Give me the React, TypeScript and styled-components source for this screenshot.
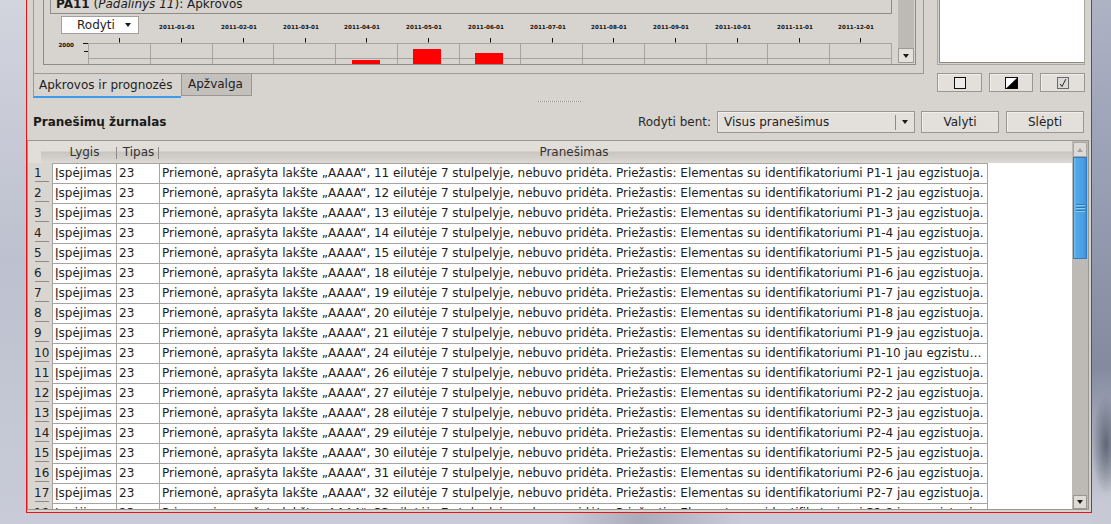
import React from "react";
import styled, { createGlobalStyle } from "styled-components";

const rows: [number, string][] = [
  [11, "P1-1"], [12, "P1-2"], [13, "P1-3"], [14, "P1-4"], [15, "P1-5"],
  [18, "P1-6"], [19, "P1-7"], [20, "P1-8"], [21, "P1-9"], [24, "P1-10"],
  [26, "P2-1"], [27, "P2-2"], [28, "P2-3"], [29, "P2-4"], [30, "P2-5"],
  [31, "P2-6"], [32, "P2-7"], [33, "P2-8"],
];

const message = (line: number, id: string) =>
  `Priemonė, aprašyta lakšte „AAAA“, ${line} eilutėje 7 stulpelyje, nebuvo pridėta. Priežastis: Elementas su identifikatoriumi ${id} jau egzistuoja.`;

const GlobalStyle = createGlobalStyle`
  html, body {
    margin: 0;
    padding: 0;
  }
  body {
    width: 1111px;
    height: 524px;
    overflow: hidden;
    font-family: "DejaVu Sans", "Liberation Sans", sans-serif;
    font-size: 12px;
    color: #1e1e1e;
  }
`;

export default function App() {
  return (
    <>
      <GlobalStyle />
      <Desktop>
        <Window>
          <TopSection>
            <TabWidget>
              <Pane>
                <ScrollArea>
                  <Viewport>
                    <GroupTitle>
                      <b>PA11</b> (<i>Padalinys 11</i>): Apkrovos
                    </GroupTitle>
                    <ChartCanvas>
                      <LoadChart />
                      <ChartCombo>
                        <span>Rodyti</span>
                        <ArrowDown />
                      </ChartCombo>
                    </ChartCanvas>
                  </Viewport>
                  <SmallScrollbar>
                    <Trough />
                    <ScrollButton>
                      <ArrowDown />
                    </ScrollButton>
                  </SmallScrollbar>
                </ScrollArea>
              </Pane>
              <TabBar>
                <ActiveTab>Apkrovos ir prognozės</ActiveTab>
                <InactiveTab>Apžvalga</InactiveTab>
              </TabBar>
            </TabWidget>
            <RightPanel>
              <ListBox />
              <IconButtons>
                <IconButton>
                  <svg width="12" height="12" viewBox="0 0 12 12">
                    <rect x="0.5" y="0.5" width="11" height="11" fill="#ecebea" stroke="#111" />
                  </svg>
                </IconButton>
                <IconButton>
                  <svg width="13" height="12" viewBox="0 0 13 12">
                    <rect x="0.5" y="0.5" width="12" height="11" fill="#fff" stroke="#111" />
                    <path d="M12.5 0.5 L12.5 11.5 L1 11.5 Z" fill="#000" />
                  </svg>
                </IconButton>
                <IconButton>
                  <svg width="12" height="12" viewBox="0 0 12 12">
                    <rect x="0.5" y="0.5" width="11" height="11" fill="#dcdad8" stroke="#6a6a6a" />
                    <path d="M3 7 L5 9.5 L8.8 2.2" fill="none" stroke="#222" strokeWidth="1" />
                  </svg>
                </IconButton>
              </IconButtons>
            </RightPanel>
          </TopSection>

          <Splitter>
            <SplitterHandle />
          </Splitter>

          <LogHeader>
            <LogTitle>Pranešimų žurnalas</LogTitle>
            <Spacer />
            <FilterLabel>Rodyti bent:</FilterLabel>
            <FilterCombo>
              <ComboText>Visus pranešimus</ComboText>
              <ComboArrowBox>
                <ArrowDown />
              </ComboArrowBox>
            </FilterCombo>
            <PushButton $gap={6}>Valyti</PushButton>
            <PushButton $gap={7}>Slėpti</PushButton>
          </LogHeader>

          <TableFrame>
            <TableMain>
              <HeaderRow>
                <HeadCell $w={24} />
                <HeadCell $w={65} $sep={0}>Lygis</HeadCell>
                <HeadCell $w={43} $sep={1}>Tipas</HeadCell>
                <HeadCell $w={828}>Pranešimas</HeadCell>
              </HeaderRow>
              <TableBody>
                {rows.map(([line, id], i) => (
                  <Row key={id}>
                    <RowNum>{i + 1}</RowNum>
                    <Cell $w={65} $first>Įspėjimas</Cell>
                    <Cell $w={43}>23</Cell>
                    <Cell $w={828} $tight>{message(line, id)}</Cell>
                  </Row>
                ))}
              </TableBody>
            </TableMain>
            <TableScrollbar>
              <UpButton>
                <ArrowUp />
              </UpButton>
              <Thumb>
                <Grip />
              </Thumb>
              <Trough />
              <DownButton>
                <ArrowDown />
              </DownButton>
            </TableScrollbar>
          </TableFrame>
        </Window>
      </Desktop>
    </>
  );
}

function LoadChart() {
  const ticks = Array.from({ length: 13 }, (_, i) => Math.round(119.3 + 61.75 * i));
  const grid = Array.from({ length: 14 }, (_, i) => Math.round(88 + 61.75 * i));
  return (
    <svg width={854} height={60} viewBox="44 14 854 60" style={{ display: "block" }}>
      <g fontFamily="DejaVu Sans, sans-serif" fontSize="5.6" fontWeight="bold" fill="#111">
        {ticks.slice(1).map((x, i) => (
          <text key={x} x={x - 4} y={29} textAnchor="middle">
            {`2011-${String(i + 1).padStart(2, "0")}-01`}
          </text>
        ))}
        <text x={74} y={47} textAnchor="end">
          2000
        </text>
      </g>
      <g stroke="#111" strokeWidth="1">
        {ticks.map((x) => (
          <line key={x} x1={x + 0.5} x2={x + 0.5} y1={38} y2={42.5} />
        ))}
        <line x1={83} x2={88} y1={43.5} y2={43.5} />
        <line x1={84} x2={88} y1={51.5} y2={51.5} />
      </g>
      <g stroke="#a7a3a0" strokeWidth="1">
        {grid.map((x) => (
          <line key={x} x1={x + 0.5} x2={x + 0.5} y1={43} y2={74} />
        ))}
        <line x1={88} x2={892} y1={43.5} y2={43.5} />
        <line x1={88} x2={892} y1={58.5} y2={58.5} />
      </g>
      <g fill="#ff0000">
        <rect x={352} y={60} width={28} height={14} />
        <rect x={413} y={49} width={28} height={25} />
        <rect x={475} y={53} width={28} height={21} />
      </g>
    </svg>
  );
}

const Desktop = styled.div`
  width: 1111px;
  height: 524px;
  overflow: hidden;
  background:
    radial-gradient(ellipse 14px 50px at 1106px 445px, rgba(70, 78, 92, 0.75), transparent),
    linear-gradient(to bottom, #aeb3c4 0%, #959cb1 40%, #848b9f 70%, #c7cad5 96%) right top / 19px 100% no-repeat,
    linear-gradient(to right, transparent 560px, rgba(96, 100, 112, 0.3) 640px, transparent 740px) left bottom / 100% 11px no-repeat,
    linear-gradient(to bottom, #d2d4de 0%, #bdc0ce 50%, #c9ccd8 100%);
`;

const Window = styled.div`
  margin-left: 26px;
  width: 1066px;
  height: 513px;
  box-sizing: border-box;
  border: 1px solid #ee1111;
  border-top: none;
  background: #d7d3cf;
  display: flex;
  flex-direction: column;
`;

const TopSection = styled.div`
  height: 98px;
  flex-shrink: 0;
  display: flex;
  padding-left: 6px;
`;

const TabWidget = styled.div`
  width: 891px;
  display: flex;
  flex-direction: column;
`;

const Pane = styled.div`
  height: 74px;
  box-sizing: border-box;
  border: 1px solid #9d9995;
  border-top: none;
  padding: 0 7px 8px 9px;
  display: flex;
`;

const ScrollArea = styled.div`
  flex: 1;
  display: flex;
  border: 1px solid #8f8b87;
  border-top: none;
`;

const Viewport = styled.div`
  flex: 1;
  overflow: hidden;
  display: flex;
  flex-direction: column;
`;

const GroupTitle = styled.div`
  flex-shrink: 0;
  margin: -6px 6px 0;
  border: 1px solid #8f8b87;
  padding: 2px 5px 2px;
  line-height: 14px;
  white-space: nowrap;
  color: #1a1a1a;
`;

const ChartCanvas = styled.div`
  position: relative;
  height: 60px;
  flex-shrink: 0;
`;

const ChartCombo = styled.div`
  position: absolute;
  left: 17px;
  top: 2px;
  width: 78px;
  height: 18px;
  box-sizing: border-box;
  background: #fff;
  border: 1px solid #a3a09c;
  display: flex;
  align-items: center;
  justify-content: space-between;
  padding: 0 7px 0 15px;
  line-height: 16px;
`;

const SmallScrollbar = styled.div`
  width: 16px;
  margin-right: 1px;
  display: flex;
  flex-direction: column;
  padding-bottom: 1px;
`;

const Trough = styled.div`
  flex: 1;
  background: #bdb9b5;
`;

const ScrollButton = styled.div`
  height: 15px;
  box-sizing: border-box;
  background: #e4e1dd;
  border: 1px solid #9d9995;
  display: flex;
  align-items: center;
  justify-content: center;
`;

const ArrowDown = styled.span`
  width: 0;
  height: 0;
  border-left: 3.5px solid transparent;
  border-right: 3.5px solid transparent;
  border-top: 4px solid #1a1a1a;
`;

const ArrowUp = styled.span`
  width: 0;
  height: 0;
  border-left: 3.5px solid transparent;
  border-right: 3.5px solid transparent;
  border-bottom: 4px solid #a6a29e;
`;

const TabBar = styled.div`
  height: 24px;
  display: flex;
  align-items: flex-start;
`;

const ActiveTab = styled.div`
  width: 148px;
  height: 24px;
  box-sizing: border-box;
  border-left: 1px solid #9d9995;
  border-bottom: 2px solid #3f9be6;
  padding-left: 5px;
  line-height: 22px;
  white-space: nowrap;
`;

const InactiveTab = styled.div`
  width: 71px;
  height: 23px;
  margin-top: -1px;
  box-sizing: border-box;
  border: 1px solid #9a9692;
  background: #c4c0bc;
  padding-left: 6px;
  line-height: 20px;
  white-space: nowrap;
`;

const RightPanel = styled.div`
  width: 148px;
  margin-left: 13px;
  display: flex;
  flex-direction: column;
`;

const ListBox = styled.div`
  height: 65px;
  box-sizing: border-box;
  background: #fff;
  border: 1px solid #aaa6a2;
  border-top: none;
  box-shadow: inset 1px -1px 0 #d7d3cf, inset 2px -2px 0 #8d8985;
`;

const IconButtons = styled.div`
  margin-top: 8px;
  height: 19px;
  display: grid;
  grid-template-columns: 45px 44px 45px;
  column-gap: 7px;
`;

const IconButton = styled.div`
  box-sizing: border-box;
  border: 1px solid #9a9692;
  background: #e3e0dc;
  box-shadow: inset 1px 1px 0 #f1efed;
  display: flex;
  align-items: center;
  justify-content: center;
`;

const Splitter = styled.div`
  height: 13px;
  flex-shrink: 0;
  display: flex;
  justify-content: center;
  padding-top: 3px;
  box-sizing: border-box;
`;

const SplitterHandle = styled.div`
  width: 43px;
  height: 1px;
  background: repeating-linear-gradient(to right, #8c8884 0 1px, #f4f2f0 1px 2px);
`;

const LogHeader = styled.div`
  height: 22px;
  flex-shrink: 0;
  display: flex;
  align-items: center;
  padding: 0 7px 0 6px;
`;

const LogTitle = styled.div`
  font-weight: bold;
  color: #1a1a1a;
`;

const Spacer = styled.div`
  flex: 1;
`;

const FilterLabel = styled.div`
  margin-right: 6px;
  color: #2a2a2a;
`;

const FilterCombo = styled.div`
  width: 198px;
  height: 22px;
  box-sizing: border-box;
  border: 1px solid #9a9692;
  background: #e3e0dc;
  box-shadow: inset 1px 1px 0 #f1efed;
  display: flex;
  align-items: center;
  padding-left: 6px;
`;

const ComboText = styled.div`
  flex: 1;
  white-space: nowrap;
`;

const ComboArrowBox = styled.div`
  width: 18px;
  height: 15px;
  border-left: 1px solid #8e8a86;
  display: flex;
  align-items: center;
  justify-content: center;
`;

const PushButton = styled.div<{ $gap: number }>`
  width: 78px;
  height: 22px;
  margin-left: ${(p) => p.$gap}px;
  box-sizing: border-box;
  border: 1px solid #9a9692;
  background: #e3e0dc;
  box-shadow: inset 1px 1px 0 #f1efed;
  text-align: center;
  line-height: 20px;
`;

const TableFrame = styled.div`
  margin: 7px 2px 0 0;
  height: 370px;
  flex-shrink: 0;
  box-sizing: border-box;
  border: 1px solid #9a9692;
  display: flex;
  background: #fff;
`;

const TableMain = styled.div`
  flex: 1;
  min-width: 0;
  display: flex;
  flex-direction: column;
  overflow: hidden;
`;

const HeaderRow = styled.div`
  height: 22px;
  flex-shrink: 0;
  display: flex;
  background:
    linear-gradient(to bottom, #e1ddd9 0, #e1ddd9 10px, #c9c5c1 11px, #dcd8d4 100%) 13px 0 / calc(100% - 13px) 100% no-repeat,
    #e1ddd9;
`;

const HeadCell = styled.div<{ $w: number; $sep?: number }>`
  width: ${(p) => p.$w}px;
  flex-shrink: 0;
  box-sizing: border-box;
  position: relative;
  text-align: center;
  line-height: 22px;
  color: #333;
  white-space: nowrap;
  &::after {
    content: "";
    display: ${(p) => (p.$sep === undefined ? "none" : "block")};
    position: absolute;
    right: ${(p) => p.$sep ?? 0}px;
    top: 6px;
    bottom: 4px;
    width: 1px;
    background: #8e8a86;
  }
`;

const TableBody = styled.div`
  flex: 1;
  overflow: hidden;
  background: #fff;
`;

const Row = styled.div`
  height: 20px;
  display: flex;
`;

const RowNum = styled.div`
  width: 24px;
  flex-shrink: 0;
  box-sizing: border-box;
  position: relative;
  background: #d9d5d1;
  padding: 1px 0 0 6px;
  line-height: 19px;
  color: #222;
  &::after {
    content: "";
    position: absolute;
    left: 7px;
    width: 14px;
    bottom: 1px;
    height: 1px;
    background: #8e8a86;
  }
`;

const Cell = styled.div<{ $w: number; $first?: boolean; $tight?: boolean }>`
  width: ${(p) => p.$w}px;
  flex-shrink: 0;
  box-sizing: border-box;
  border-top: 1px solid #a7a3a0;
  border-right: 1px solid #a7a3a0;
  border-left: ${(p) => (p.$first ? "1px solid #a7a3a0" : "none")};
  padding: 0 0 0 2px;
  line-height: 19px;
  letter-spacing: ${(p) => (p.$tight ? "-0.035px" : "normal")};
  white-space: nowrap;
  overflow: hidden;
  text-overflow: ellipsis;
`;

const TableScrollbar = styled.div`
  width: 16px;
  flex-shrink: 0;
  display: flex;
  flex-direction: column;
  background: #bdb9b5;
`;

const UpButton = styled.div`
  height: 15px;
  margin: 1px 1px 0;
  box-sizing: border-box;
  background: #dedbd7;
  border: 1px solid #aaa6a2;
  display: flex;
  align-items: center;
  justify-content: center;
`;

const Thumb = styled.div`
  height: 102px;
  margin: 0 1px;
  box-sizing: border-box;
  border: 1px solid #2b7cc2;
  background: linear-gradient(to right, #7cc0f2 0, #52a8ea 2px, #4a9fe3 75%, #3a8fd6 100%);
  display: flex;
  align-items: center;
  justify-content: center;
`;

const Grip = styled.div`
  width: 9px;
  height: 8px;
  background: repeating-linear-gradient(to bottom, #2f78b6 0 1px, #8ccaf6 1px 2px, transparent 2px 3px);
`;

const DownButton = styled.div`
  height: 14px;
  margin: 0 1px;
  box-sizing: border-box;
  background: #dedbd7;
  border: 1px solid #9a9692;
  display: flex;
  align-items: center;
  justify-content: center;
`;
